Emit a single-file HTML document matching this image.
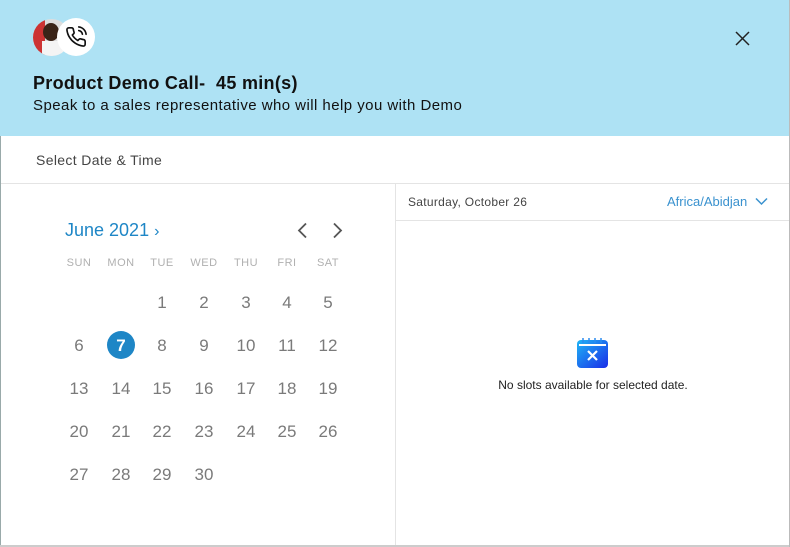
<!DOCTYPE html>
<html><head><style>
*{margin:0;padding:0;box-sizing:border-box}
body{width:790px;height:547px;overflow:hidden;background:#fff;font-family:"Liberation Sans",sans-serif;position:relative}
.a{position:absolute}
.hdr{left:0;top:0;width:790px;height:136px;background:#aee2f4}
.c{position:absolute;width:40px;text-align:center;transform:translateX(-20px)}
.dh{font-size:11px;color:#b0b0b0;top:257px;letter-spacing:.5px}
.dn{font-size:17px;color:#7a7a7a}
</style></head><body>
<div class="a" style="left:0;top:0;width:1px;height:547px;background:#9aa"></div>
<div class="a hdr"></div>
<div class="a" style="left:33px;top:19px;width:37px;height:37px;border-radius:50%;background:#ddd;overflow:hidden">
<div class="a" style="left:0;top:0;width:12px;height:37px;background:#c33"></div>
<div class="a" style="left:10px;top:4px;width:16px;height:18px;border-radius:50%;background:#3a2418"></div>
<div class="a" style="left:9px;top:22px;width:22px;height:16px;background:#f4f4f4"></div>
</div>
<div class="a" style="left:57px;top:18px;width:38px;height:38px;border-radius:50%;background:#fff"></div>
<svg class="a" style="left:65px;top:26px" width="22" height="22" viewBox="0 0 24 24" fill="none" stroke="#111" stroke-width="1.8" stroke-linecap="round" stroke-linejoin="round"><path d="M22 16.9v3a2 2 0 0 1-2.2 2 19.8 19.8 0 0 1-8.6-3.1 19.5 19.5 0 0 1-6-6A19.8 19.8 0 0 1 2.1 4.2 2 2 0 0 1 4.1 2h3a2 2 0 0 1 2 1.7c.1 1 .4 1.9.7 2.8a2 2 0 0 1-.5 2.1L8 9.8a16 16 0 0 0 6 6l1.3-1.3a2 2 0 0 1 2.1-.4c.9.3 1.8.6 2.8.7a2 2 0 0 1 1.7 2z"/><path d="M15 5a5 5 0 0 1 4 4M15 1a9 9 0 0 1 8 8"/></svg>
<svg class="a" style="left:735px;top:31px" width="15" height="15" viewBox="0 0 15 15" stroke="#222" stroke-width="1.5"><path d="M1 1L14 14M14 1L1 14"/></svg>
<div class="a" style="left:33px;top:73px;font-size:18px;font-weight:bold;color:#111;letter-spacing:.3px">Product Demo Call-&nbsp; 45 min(s)</div>
<div class="a" style="left:33px;top:97px;font-size:15px;color:#111;letter-spacing:.45px">Speak to a sales representative who will help you with Demo</div>
<div class="a" style="left:36px;top:152px;font-size:14px;color:#444;letter-spacing:.35px">Select Date &amp; Time</div>
<div class="a" style="left:1px;top:183px;width:789px;height:1px;background:#e4e4e4"></div>
<div class="a" style="left:395px;top:184px;width:1px;height:363px;background:#e4e4e4"></div>
<div class="a" style="left:396px;top:220px;width:394px;height:1px;background:#e4e4e4"></div>
<div class="a" style="left:0;top:545px;width:790px;height:2px;background:#ccc"></div>
<div class="a" style="left:789px;top:0;width:1px;height:547px;background:#bbb"></div>
<div class="a" style="left:408px;top:195px;font-size:12px;color:#444;letter-spacing:.3px">Saturday, October 26</div>
<div class="a" style="left:667px;top:194px;font-size:13px;color:#3a92cf">Africa/Abidjan</div>
<svg class="a" style="left:755px;top:197px" width="13" height="9" viewBox="0 0 13 9" fill="none" stroke="#3a92cf" stroke-width="1.5"><path d="M1 1.5l5.5 5.5 5.5-5.5"/></svg>
<svg class="a" style="left:576px;top:337px" width="33" height="31" viewBox="0 0 33 31"><defs><linearGradient id="g" x1="0" y1="0" x2="1" y2="1"><stop offset="0" stop-color="#1fb5f5"/><stop offset="1" stop-color="#1a2de8"/></linearGradient></defs><rect x="1" y="3" width="31" height="28" rx="4" fill="url(#g)"/><rect x="3" y="7" width="27" height="2" fill="#fff"/><path d="M7 1v5M13 1v5M19 1v5M25 1v5" stroke="#2a8cf0" stroke-width="1.5"/><path d="M12 14l9 9M21 14l-9 9" stroke="#fff" stroke-width="2.2"/></svg>
<div class="a" style="left:396px;top:378px;width:394px;text-align:center;font-size:12px;color:#222">No slots available for selected date.</div>
<div class="a" style="left:65px;top:220px;font-size:18px;color:#1e86c6">June 2021 <span style="font-size:16px">&#8250;</span></div>
<svg class="a" style="left:296px;top:222px" width="12" height="17" viewBox="0 0 12 17" fill="none" stroke="#555" stroke-width="1.8"><path d="M10 1.5L3 8.5l7 7"/></svg>
<svg class="a" style="left:332px;top:222px" width="12" height="17" viewBox="0 0 12 17" fill="none" stroke="#555" stroke-width="1.8"><path d="M2 1.5l7 7-7 7"/></svg>
<div class="a" style="left:107px;top:331px;width:28px;height:28px;border-radius:50%;background:#1e86c6"></div>
<div id="cal"></div>
<script>
var xs=[79,121,162,204,246,287,328],hd=["SUN","MON","TUE","WED","THU","FRI","SAT"],h="";
for(var i=0;i<7;i++)h+='<div class="c dh" style="left:'+xs[i]+'px">'+hd[i]+'</div>';
for(var d=1;d<=30;d++){var p=d+1,r=Math.floor(p/7),c=p%7;var y=[293,336,379,422,465][r];
h+='<div class="c dn" style="left:'+xs[c]+'px;top:'+y+'px;'+(d==7?'color:#fff;font-weight:bold':'')+'">'+d+'</div>';}
document.getElementById('cal').innerHTML=h;
</script>
</body></html>
